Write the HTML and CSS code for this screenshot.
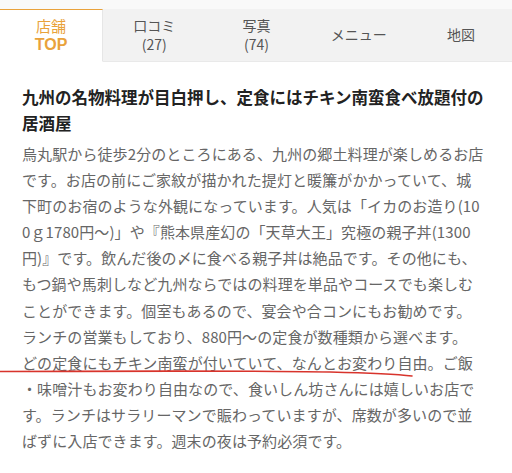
FILE: index.html
```html
<!DOCTYPE html>
<html lang="ja">
<head>
    <meta charset="UTF-8">
    <meta name="viewport" content="width=device-width, initial-scale=1.0">
    <title>店舗TOP</title>
    <link rel="stylesheet" href="styles.css">
</head>
<body>
    <nav class="tabs">
        <div class="tab active"><span>店舗</span><span class="top">TOP</span></div>
        <div class="tab"><span>口コミ</span><span>(27)</span></div>
        <div class="tab"><span>写真</span><span>(74)</span></div>
        <div class="tab"><span>メニュー</span></div>
        <div class="tab"><span>地図</span></div>
    </nav>

    <main class="content">
        <h1>九州の名物料理が目白押し、定食にはチキン南蛮食べ放題付の<br>居酒屋</h1>
        <p class="desc">
            烏丸駅から徒歩2分のところにある、九州の郷土料理が楽しめるお店<br>
            です。お店の前にご家紋が描かれた提灯と暖簾がかかっていて、城<br>
            下町のお宿のような外観になっています。人気は「イカのお造り(10<br>
            0ｇ1780円～)」や『熊本県産幻の「天草大王」究極の親子丼(1300<br>
            円)』です。飲んだ後の〆に食べる親子丼は絶品です。その他にも、<br>
            もつ鍋や馬刺しなど九州ならではの料理を単品やコースでも楽しむ<br>
            ことができます。個室もあるので、宴会や合コンにもお勧めです。<br>
            ランチの営業もしており、880円～の定食が数種類から選べます。<br>
            どの定食にもチキン南蛮が付いていて、なんとお変わり自由。ご飯<br>
            ・味噌汁もお変わり自由なので、食いしん坊さんには嬉しいお店で<br>
            す。ランチはサラリーマンで賑わっていますが、席数が多いので並<br>
            ばずに入店できます。週末の夜は予約必須です。
        </p>
        <svg class="mark" width="430" height="12" viewBox="0 0 430 12">
            <path d="M0 3.5 C 120 3, 250 2.5, 330 4 C 370 5, 395 6, 412 8" fill="none" stroke="#d8342c" stroke-width="1.6" stroke-linecap="round"/>
        </svg>
    </main>
</body>
</html>
```

FILE: styles.css
```css
/* General Styles */
body {
    margin: 0;
    background-color: #FFFFFF;
    font-family: "Noto Sans CJK JP", "Noto Sans", sans-serif;
    color: #666666;
}

.tabs {
    display: flex;
    background-color: #F9F9F9;
    padding-top: 9px;
}

.tab {
    flex: 1;
    height: 53px;
    display: flex;
    flex-direction: column;
    align-items: center;
    justify-content: center;
    padding-bottom: 2px;
    box-sizing: border-box;
    background-color: #F2F2F2;
    border-bottom: 1px solid #E9E9E9;
    border-top: 1px solid #F2F2F2;
    color: #555555;
    font-size: 14px;
    line-height: 19px;
}

.tab.active {
    background-color: #FFFFFF;
    border-top: 1px solid #E9A23B;
    border-bottom: 1px solid #FFFFFF;
    border-right: 1px solid #E6E6E6;
    color: #E9A23B;
    font-size: 15px;
}

.tab .top {
    font-family: "Liberation Sans", Arial, sans-serif;
    font-weight: bold;
    font-size: 16px;
}

.content {
    position: relative;
    padding: 22px 22px 0 22px;
}

h1 {
    margin: 0 0 5px 0;
    font-size: 16.5px;
    line-height: 26px;
    font-weight: bold;
    color: #222222;
    white-space: nowrap;
}

.desc {
    margin: 0;
    font-size: 15px;
    line-height: 26.1px;
    letter-spacing: 0.1px;
    white-space: nowrap;
}

.mark {
    position: absolute;
    left: 0;
    top: 306px;
}
```
